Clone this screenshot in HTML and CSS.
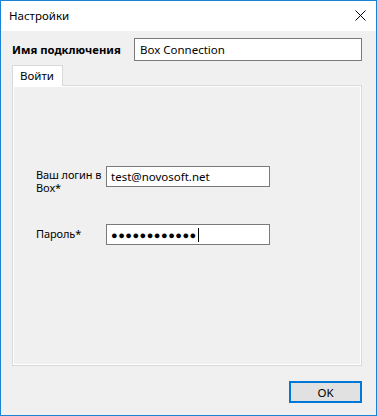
FILE: index.html
```html
<!DOCTYPE html>
<html>
<head>
<meta charset="utf-8">
<link rel="stylesheet" href="styles.css">
</head>
<body>
<div class="window">
  <div class="titlebar">
    <span class="title">Настройки</span>
    <svg class="close" width="11" height="11" viewBox="0 0 11 11"><path d="M0.5 0.5 L10.5 10.5 M10.5 0.5 L0.5 10.5" stroke="#000" stroke-width="1" fill="none"/></svg>
  </div>
  <div class="content">
    <div class="name-row">
      <span class="name-label">Имя подключения</span>
      <div class="field name-field">Box Connection</div>
    </div>
    <div class="tabs">
      <div class="tab">Войти</div>
    </div>
    <div class="panel">
      <div class="form">
        <div class="label">Ваш логин в Box*</div>
        <div class="field input">test@novosoft.net</div>
        <div class="label pw-label">Пароль*</div>
        <div class="field input"><span class="dots">●●●●●●●●●●●●</span><span class="caret"></span></div>
      </div>
    </div>
    <div class="buttons">
      <div class="btn">OK</div>
    </div>
  </div>
</div>
</body>
</html>
```
FILE: styles.css
```css
html, body {
  margin: 0;
  padding: 0;
  background: #f0f0f0;
}
body {
  font-family: "Noto Sans", "Open Sans", sans-serif;
  font-size: 11.5px;
  color: #000;
}
.window {
  width: 377px;
  height: 416px;
  box-sizing: border-box;
  border: 1px solid #1883d7;
  display: flex;
  flex-direction: column;
}
.titlebar {
  height: 30px;
  background: #fff;
  display: flex;
  align-items: center;
  justify-content: space-between;
  padding: 0 10px 0 8px;
  flex: none;
}
.title {
  margin-top: -1px;
}
.close {
  display: block;
  margin-top: -1px;
}
.content {
  flex: 1;
  background: #f0f0f0;
  padding: 7px 14px 0 11px;
  display: flex;
  flex-direction: column;
}
.name-row {
  display: flex;
  align-items: center;
  justify-content: space-between;
  height: 23px;
}
.name-label {
  font-weight: bold;
  font-size: 11.3px;
}
.field {
  box-sizing: border-box;
  background: #fff;
  border: 1px solid #7a7a7a;
  display: flex;
  align-items: center;
  padding-left: 5px;
  white-space: nowrap;
}
.name-field {
  width: 228px;
  height: 23px;
}
.tabs {
  margin-top: 4px;
  display: flex;
  position: relative;
  z-index: 1;
}
.tab {
  width: 51px;
  height: 21px;
  box-sizing: border-box;
  background: #fff;
  border: 1px solid #d9d9d9;
  border-bottom: none;
  padding: 2px 0 0 7px;
}
.panel {
  margin-top: -1px;
  width: 350px;
  height: 281px;
  box-sizing: border-box;
  border: 1px solid #d9d9d9;
  box-shadow: inset 0 0 0 1px #fff;
  background: #f0f0f0;
  padding: 80px 0 0 23px;
}
.form {
  display: grid;
  grid-template-columns: 70px 164px;
  row-gap: 30px;
}
.label {
  font-size: 11px;
  letter-spacing: -0.1px;
  line-height: 13px;
  padding-top: 2px;
  width: 69px;
}
.pw-label {
  padding-top: 3px;
}
.input {
  height: 21px;
  padding-left: 4px;
}
.dots {
  font-size: 11px;
  letter-spacing: 0.5px;
}
.caret {
  display: inline-block;
  width: 1px;
  height: 14px;
  background: #000;
  margin-left: 1px;
}
.buttons {
  display: flex;
  justify-content: flex-end;
  margin-top: 15px;
}
.btn {
  width: 73px;
  height: 22px;
  box-sizing: border-box;
  border: 2px solid #0078d7;
  background: #e1e1e1;
  display: flex;
  align-items: center;
  justify-content: center;
}
```
